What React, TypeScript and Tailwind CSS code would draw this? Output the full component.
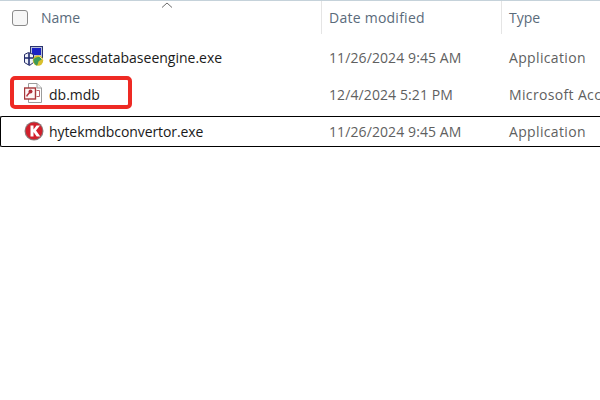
const font = "font-['Open_Sans','Noto_Sans',sans-serif]";

function SetupIcon() {
  return (
    <svg className="shrink-0 -translate-y-[2px]" width="20" height="20" viewBox="0 0 20 20">
      <rect x="6.5" y=".5" width="12" height="11" fill="#b9c0d8" stroke="#2c356f" />
      <rect x="8" y="2" width="9" height="7" fill="#1a22c4" />
      <path d="M9 12h8v2H9z" fill="#7d88a8" />
      <path d="M.5 8.5l4-2 5 2v8l-4 3-5-3z" fill="#eef1f8" stroke="#232b66" />
      <path d="M1 12h8M5 7v12" stroke="#1f2a6e" strokeWidth="1.6" />
      <circle cx="14" cy="14.5" r="5.2" fill="#d8bf2c" />
      <path d="M9.3 13.5c2-3 6.5-3.4 9-1-1.5 2-3.5 2-4 3.5-.4 1.5-.6 3-1.5 3.6-2-.8-3.2-3.5-3.5-6.1z" fill="#3d9a59" />
      <path d="M15.5 10.5l3 3" stroke="#e9e4a0" strokeWidth="1" />
    </svg>
  );
}

function AccessIcon() {
  return (
    <svg className="shrink-0 -translate-y-[2px]" width="20" height="20" viewBox="0 0 20 20">
      <path d="M4.5 .5h8.5l4.5 4.5v14.5h-13z" fill="#fff" stroke="#9c9c9c" />
      <path d="M13 .5v4.5h4.5" fill="#f2f2f2" stroke="#9c9c9c" />
      <path d="M12.5 7.5h3v6h-3" fill="none" stroke="#b9606a" />
      <rect x=".5" y="5" width="11" height="11" fill="#fdf6f6" stroke="#a4373a" strokeWidth="1.4" />
      <circle cx="6.5" cy="8.5" r="2" fill="#b22f3a" />
      <path d="M6 9l-3 3.5v1" fill="none" stroke="#b22f3a" strokeWidth="1.5" />
    </svg>
  );
}

function KIcon() {
  return (
    <svg className="shrink-0 -translate-y-px" width="20" height="20" viewBox="0 0 20 20">
      <circle cx="10" cy="10" r="9.5" fill="#8c7b7b" />
      <circle cx="10" cy="10" r="8.4" fill="#d11f2b" />
      <path d="M6.5 4.5h3v4l3-4h3.5l-4 5 4.3 6h-3.6l-3.2-4.6v4.6h-3z" fill="#fff" />
    </svg>
  );
}

function Row({ icon, name, date, type, className, nameClass }: { icon: React.ReactNode; name: string; date: string; type: string; className: string; nameClass?: string }) {
  return (
    <div className={`flex items-center w-[640px] ${className}`}>
      <div className="w-[329px] shrink-0 pl-[24px] flex items-center gap-[5px] text-[14px] text-[#1a1a1a]">
        {icon}
        <span className={nameClass}>{name}</span>
      </div>
      <div className="w-[180px] shrink-0 text-[14px] text-[#5f5f5f] whitespace-nowrap tracking-[0.1px]">{date}</div>
      <div className="text-[14px] text-[#5f5f5f] whitespace-nowrap tracking-[0.35px]">{type}</div>
    </div>
  );
}

export default function App() {
  return (
    <div className={`relative w-[600px] h-[400px] bg-white overflow-hidden ${font}`}>
      {/* Column header */}
      <div className="flex h-[34px] border-t border-[#c5d2da] text-[14px] text-[#5a6b7b]">
        <div className="relative w-[321px] shrink-0 flex items-center pl-3">
          <div className="w-4 h-4 rounded-[3px] border border-[#8a8a8a] bg-[#f6f6f6]" />
          <span className="ml-[13px]">Name</span>
          <svg className="absolute left-[161px] top-[1px]" width="12" height="6" viewBox="0 0 12 6">
            <path d="M1 5.5L6 1l5 4.5" fill="none" stroke="#6d6d6d" />
          </svg>
        </div>
        <div className="w-[180px] shrink-0 flex items-center pl-[7px] border-l border-[#e5e5e5] tracking-[0.25px]">Date modified</div>
        <div className="flex-1 flex items-center pl-[7px] border-l border-[#e5e5e5]">Type</div>
      </div>

      {/* Files */}
      <div className="flex flex-col pt-[5px]">
        <Row className="h-[37px]" icon={<SetupIcon />} name="accessdatabaseengine.exe" date="11/26/2024 9:45 AM" type="Application" />
        <Row className="h-[37px]" icon={<AccessIcon />} name="db.mdb" date="12/4/2024 5:21 PM" type="Microsoft Access Database" />
        <div className="mt-[3px] h-[31px] border-y border-l border-black rounded-l-[2px] flex items-center">
          <div className="-ml-px">
            <Row className="h-[29px]" nameClass="tracking-[-0.08px]" icon={<KIcon />} name="hytekmdbconvertor.exe" date="11/26/2024 9:45 AM" type="Application" />
          </div>
        </div>
      </div>

      {/* Red annotation box */}
      <div className="absolute left-[10px] top-[76px] w-[122px] h-[33px] border-4 border-[#ee2a24] rounded-[5px]" />
    </div>
  );
}
